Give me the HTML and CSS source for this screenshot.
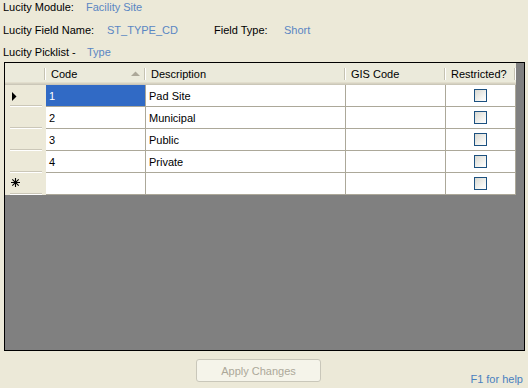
FILE: index.html
```html
<!DOCTYPE html>
<html>
<head>
    <meta charset="UTF-8">
    <title>Picklist Editor</title>
    <link rel="stylesheet" href="styles.css">
</head>
<body>
    <div class="info">
        <div class="info-row">
            <span class="label w-module">Lucity Module:</span>
            <span class="value">Facility Site</span>
        </div>
        <div class="info-row">
            <span class="label w-field">Lucity Field Name:</span>
            <span class="value w-code">ST_TYPE_CD</span>
            <span class="label w-type">Field Type:</span>
            <span class="value">Short</span>
        </div>
        <div class="info-row">
            <span class="label w-pick">Lucity Picklist -</span>
            <span class="value">Type</span>
        </div>
    </div>

    <div class="grid">
        <table>
            <colgroup>
                <col class="c-row">
                <col class="c-code">
                <col class="c-desc">
                <col class="c-gis">
                <col class="c-restr">
            </colgroup>
            <tr class="head">
                <th></th>
                <th>
                    <div class="sort-head">
                        <span>Code</span>
                        <svg width="9" height="5" viewBox="0 0 9 5"><polygon points="0,5 4.5,0.5 9,5" fill="#aca899"/></svg>
                    </div>
                </th>
                <th>Description</th>
                <th>GIS Code</th>
                <th>Restricted?</th>
            </tr>
            <tr>
                <td class="rowhead">
                    <svg class="marker" width="5" height="9" viewBox="0 0 5 9"><polygon points="0,0 4.5,4.5 0,9" fill="#000"/></svg>
                </td>
                <td class="sel">1</td>
                <td>Pad Site</td>
                <td></td>
                <td><span class="check"></span></td>
            </tr>
            <tr>
                <td class="rowhead"></td>
                <td>2</td>
                <td>Municipal</td>
                <td></td>
                <td><span class="check"></span></td>
            </tr>
            <tr>
                <td class="rowhead"></td>
                <td>3</td>
                <td>Public</td>
                <td></td>
                <td><span class="check"></span></td>
            </tr>
            <tr>
                <td class="rowhead"></td>
                <td>4</td>
                <td>Private</td>
                <td></td>
                <td><span class="check"></span></td>
            </tr>
            <tr>
                <td class="rowhead">
                    <svg class="star" width="9" height="9" viewBox="0 0 9 9">
                        <path d="M4.5 0V9M0 4.5H9M1.3 1.3L7.7 7.7M7.7 1.3L1.3 7.7" stroke="#000" stroke-width="1.1" fill="none"/>
                    </svg>
                </td>
                <td></td>
                <td></td>
                <td></td>
                <td><span class="check"></span></td>
            </tr>
        </table>
    </div>

    <div class="footer">
        <button disabled>Apply Changes</button>
        <span class="help">F1 for help</span>
    </div>
</body>
</html>
```

FILE: styles.css
```css
* {
    box-sizing: border-box;
}

body {
    margin: 0;
    width: 528px;
    height: 388px;
    overflow: hidden;
    background: #ece9d8;
    font-family: "Liberation Sans", Arial, sans-serif;
    font-size: 11px;
    color: #000;
}

/* header labels */
.info {
    padding: 1px 0 0 3px;
}

.info-row {
    display: flex;
    line-height: 13px;
    height: 13px;
}

.info-row + .info-row {
    margin-top: 10px;
}

.info-row:last-child {
    margin-top: 9px;
}

.value {
    color: #5a86c3;
}

.w-module { width: 83px; }
.w-field  { width: 104px; }
.w-code   { width: 107px; }
.w-type   { width: 70px; }
.w-pick   { width: 84px; }

/* grid */
.grid {
    margin: 3px 3px 0 4px;
    height: 289px;
    border: 1px solid #000;
    background: #808080;
}

table {
    border-collapse: separate;
    border-spacing: 0;
    table-layout: fixed;
    width: 511px;
}

.c-row   { width: 41px; }
.c-code  { width: 100px; }
.c-desc  { width: 200px; }
.c-gis   { width: 100px; }
.c-restr { width: 70px; }

tr {
    height: 22px;
}

th {
    padding: 1px 5px 0 5px;
    font-weight: normal;
    text-align: left;
    white-space: nowrap;
    vertical-align: middle;
    background:
        linear-gradient(#c5c2b2, #c5c2b2) no-repeat right 1px top 5px / 1px 12px,
        linear-gradient(#fff, #fff) no-repeat right 0 top 5px / 1px 12px,
        #ebeadb;
    border-bottom: 1px solid #cbc7b8;
    box-shadow: inset 0 -1px #d6d2c2, inset 0 -2px #e2decd;
}

.sort-head {
    display: flex;
    align-items: center;
    justify-content: space-between;
    padding-right: 1px;
}

.sort-head svg {
    display: block;
    margin-top: -1px;
}

td {
    padding: 0 3px;
    background: #fff;
    border-right: 1px solid #aca899;
    border-bottom: 1px solid #aca899;
    white-space: nowrap;
    vertical-align: middle;
}

td.rowhead {
    padding: 0 0 0 7px;
    border: none;
    background:
        linear-gradient(#cbc7b8, #cbc7b8) no-repeat 5px calc(100% - 1px) / 32px 1px,
        linear-gradient(#fff, #fff) no-repeat 5px 100% / 32px 1px,
        #ece9d8;
}

.rowhead svg {
    display: block;
}

.rowhead .star {
    margin: -3px 0 0 -1px;
}

td.sel {
    background: #316ac5;
    color: #fff;
}

.check {
    display: block;
    width: 13px;
    height: 13px;
    margin: 0 auto;
    border: 1px solid #1c5180;
    background: linear-gradient(135deg, #d8d8d1, #f6f6f3 70%, #fff);
}

/* footer */
.footer {
    display: flex;
    align-items: flex-start;
    height: 29px;
    margin-top: 8px;
    padding: 0 5px 0 196px;
}

button {
    width: 125px;
    height: 23px;
    padding: 0;
    border: 1px solid #c9c7ba;
    border-radius: 3px;
    background: #f5f4ea;
    color: #aca899;
    font-family: inherit;
    font-size: 11px;
}

.help {
    margin-left: auto;
    align-self: flex-end;
    margin-bottom: 2px;
    line-height: 13px;
    color: #4a80bf;
}
```
